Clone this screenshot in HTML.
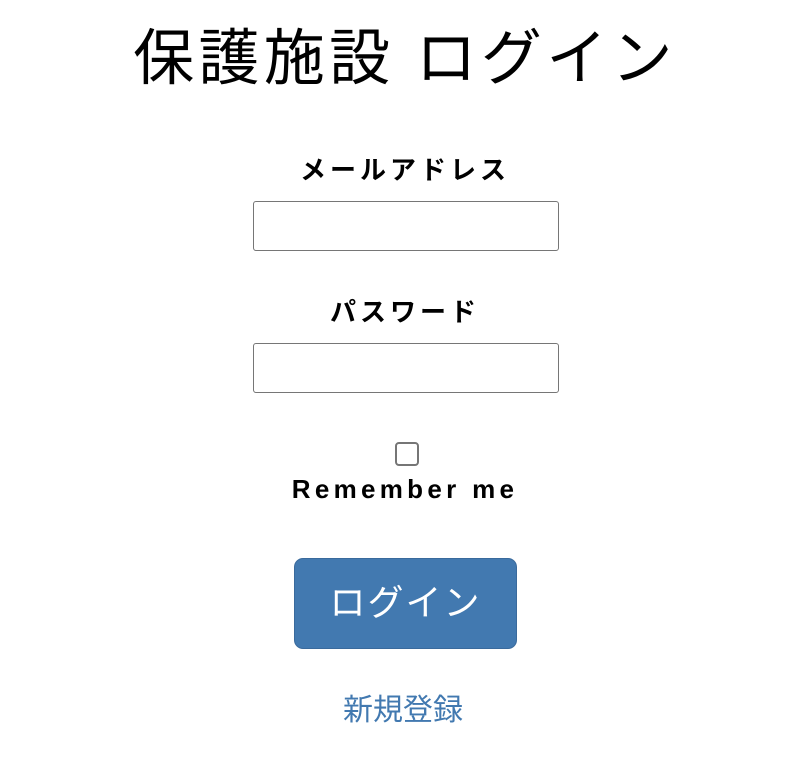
<!DOCTYPE html>
<html><head><meta charset="utf-8"><style>
body{margin:0;width:806px;height:778px;background:#fff;font-family:"Liberation Sans","Noto Sans CJK JP",sans-serif;position:relative;color:#000}
.a{position:absolute;left:0;width:806px;text-align:center;white-space:nowrap}
h1{margin:0;font-weight:normal;font-size:61px;line-height:60px;top:28px;letter-spacing:4.3px;text-indent:4px}
.l{font-weight:bold;font-size:26px;line-height:30px;letter-spacing:4px;text-indent:4px}
.in{position:absolute;left:253px;border:1px solid #767676;border-radius:3px;box-sizing:border-box;width:306px;height:50px}
.cb{position:absolute;left:395px;top:442px;width:24px;height:24px;border:2px solid #767676;border-radius:4px;box-sizing:border-box}
.btn{position:absolute;left:294px;top:558px;width:223px;height:91px;background:#4279b0;border:1px solid #3a6a9c;border-radius:9px;box-sizing:border-box;color:#fff;font-size:36px;line-height:88px;text-align:center;letter-spacing:2px}
</style></head><body>
<h1 class="a">保護施設 ログイン</h1>
<div class="a l" style="top:155px">メールアドレス</div>
<div class="in" style="top:201px"></div>
<div class="a l" style="top:297px">パスワード</div>
<div class="in" style="top:343px"></div>
<div class="cb"></div>
<div class="a l" style="top:474px;letter-spacing:4.3px">Remember me</div>
<div class="btn">ログイン</div>
<div class="a" style="top:694px;font-size:30px;line-height:34px;color:#4279b0">新規登録</div>
</body></html>
